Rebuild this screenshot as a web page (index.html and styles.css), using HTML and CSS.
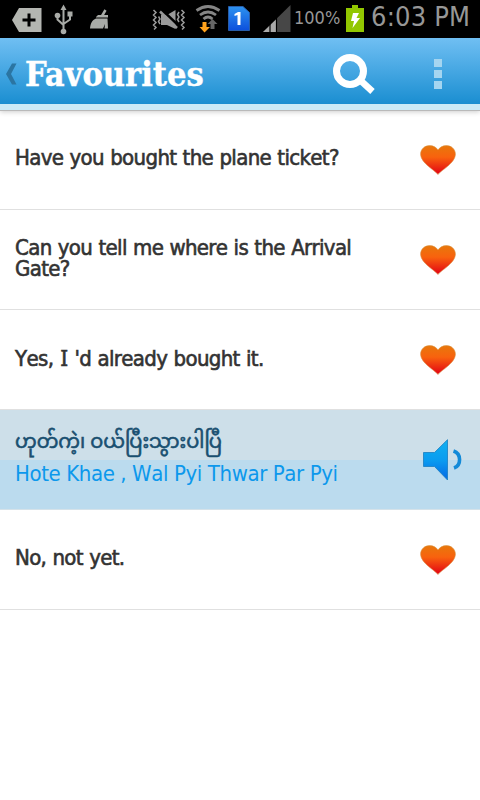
FILE: index.html
```html
<!DOCTYPE html>
<html lang="en">
<head>
  <meta charset="UTF-8">
  <meta name="viewport" content="width=device-width, initial-scale=1.0">
  <title>Favourites</title>
  <link rel="stylesheet" href="styles.css">
</head>
<body>

  <!-- gradients and the heart shared by the rows -->
  <svg class="defs" width="0" height="0">
    <defs>
      <linearGradient id="heartFill" x1="0" y1="0" x2="0" y2="1">
        <stop offset="0" stop-color="#e8780c"/>
        <stop offset="0.4" stop-color="#f8620e"/>
        <stop offset="1" stop-color="#e20015"/>
      </linearGradient>
      <linearGradient id="speakerFill" x1="0" y1="0" x2="0" y2="1">
        <stop offset="0" stop-color="#10b0f0"/>
        <stop offset="0.5" stop-color="#0a9cf0"/>
        <stop offset="1" stop-color="#0468e4"/>
      </linearGradient>
      <linearGradient id="simFill" x1="0" y1="0" x2="0" y2="1">
        <stop offset="0" stop-color="#2d93f0"/>
        <stop offset="1" stop-color="#0c4fdc"/>
      </linearGradient>
      <symbol id="heart" viewBox="0 0 36 30">
        <path d="M18 29.500C16 26 1 18.500 .6 9.500C.4 4 5 .6 9.500.6C13.500.6 16.500 2.500 18 5C19.500 2.500 22.500.6 26.500.6C31 .6 35.600 4 35.400 9.500C35 18.500 20 26 18 29.500Z" fill="url(#heartFill)" stroke="#d89040" stroke-width="0.6"/>
      </symbol>
    </defs>
  </svg>

  <div class="statusbar">
    <svg class="status-icons" width="292" height="38" viewBox="0 0 292 38">
      <!-- tag -->
      <path d="M12 20L19 8H41.500V32H19Z" fill="#b4b6b1"/>
      <path d="M29 13.500V26.500M22.500 20H35.500" stroke="#000" stroke-width="3"/>
      <!-- usb -->
      <g stroke="#a9aba7" stroke-width="2" fill="none">
        <path d="M63.500 8V32M57.500 16V19.500L63.500 25M70 15V19.500L63.500 24"/>
      </g>
      <g fill="#a9aba7">
        <path d="M60.500 10L63.500 4.500L66.500 10Z"/>
        <circle cx="57.500" cy="15.500" r="2.800"/>
        <rect x="67.500" y="11.500" width="5" height="5"/>
        <circle cx="63.500" cy="31.500" r="2.800"/>
      </g>
      <!-- broom -->
      <path d="M105.500 10L102 16" stroke="#a9aba7" stroke-width="2.500"/>
      <path d="M96 17L98 15H108V17.500H96ZM96 18.500H107.500L108 28.500H104.500L105 24L103 28.500H90C90.500 23.500 92 20 96 18.500Z" fill="#a9aba7"/>
      <!-- vibrate, muted -->
      <path d="M153.500 10L156 12.500L153.500 15L156 17.500L153.500 20L156 22.500L153.500 25L156 27.500L154 29.500M181.500 10L184 12.500L181.500 15L184 17.500L181.500 20L184 22.500L181.500 25L184 27.500L182 29.500M158.500 16.500L160 19L158.500 21.500L160 24M179 12L177.500 14.500L179 17L177.500 19.500L179 22" fill="none" stroke="#9a9a9a" stroke-width="1.500"/>
      <path d="M161 15H167L175.500 10V29L167 25H161Z" fill="#999"/>
      <path d="M161 9L179 26" stroke="#000" stroke-width="2.500"/>
      <path d="M160 11.500L177 28" stroke="#999" stroke-width="2.500"/>
      <!-- wifi -->
      <g fill="none" stroke="#858585" stroke-width="2.800">
        <path d="M196.500 10.500Q208 2.500 219.500 10.500"/>
        <path d="M200 15Q208 9 216 15"/>
        <path d="M203.500 19Q208 15 212.500 19"/>
      </g>
      <path d="M202.500 22H206.500V27H210L204.500 32.500L199.500 27H202.500Z" fill="#ffa21c"/>
      <path d="M212.500 19L217.500 24H214.500V29H210.500V24H207.500Z" fill="#666"/>
      <!-- sim 1 -->
      <path d="M228.500 6.500H243L249.500 12.500V30.500H228.500Z" fill="url(#simFill)" stroke="#285da8"/>
      <path d="M234.500 14L238 12H240.500V25H237.500V15L234.500 16Z" fill="#fff"/>
      <!-- signal -->
      <path d="M263 32L290.500 5V32Z" fill="#474747"/>
      <path d="M263 32L276 19.500V32Z" fill="#aaa"/>
      <path d="M270 24V32M276.500 18V32" stroke="#000" stroke-width="1.200"/>
    </svg>
    <span class="battery-level">100%</span>
    <svg class="battery" width="18" height="28" viewBox="0 0 18 28">
      <path d="M0 3H6V0H12V3H18V27H0Z" fill="#92c700"/>
      <path d="M7 8H13L10.500 13H14L6.500 23L8 16H5Z" fill="#fff"/>
    </svg>
    <span class="clock">6:03 PM</span>
  </div>

  <header class="header">
    <svg class="back" width="11" height="22" viewBox="0 0 11 22">
      <path d="M6 .5H10.500L5 11L10.500 21.500H6L0 11Z" fill="#2b75a2"/>
    </svg>
    <h1 class="title">Favourites</h1>
    <svg class="search" width="44" height="42" viewBox="0 0 44 42">
      <circle cx="17" cy="17" r="13.500" fill="none" stroke="#fff" stroke-width="7"/>
      <path d="M27 26L39.500 37.500" stroke="#fff" stroke-width="6.500"/>
    </svg>
    <div class="menu"><i></i><i></i><i></i></div>
  </header>

  <ul class="phrases">
    <li class="phrase">
      <p class="text">Have you bought the plane ticket?</p>
      <svg class="heart" width="36" height="30"><use href="#heart"/></svg>
    </li>
    <li class="phrase">
      <p class="text">Can you tell me where is the Arrival Gate?</p>
      <svg class="heart" width="36" height="30"><use href="#heart"/></svg>
    </li>
    <li class="phrase">
      <p class="text">Yes, <span class="serif-i">I</span> 'd already bought it.</p>
      <svg class="heart" width="36" height="30"><use href="#heart"/></svg>
    </li>
    <li class="phrase translation">
      <div class="answer">
        <p class="burmese" lang="my">ဟုတ်ကဲ့၊ ဝယ်ပြီးသွားပါပြီ</p>
        <p class="roman">Hote Khae , Wal Pyi Thwar Par Pyi</p>
      </div>
      <svg class="speaker" width="39" height="42" viewBox="0 0 39 42">
        <path d="M.5 13.500H11.500L24.500 .7V41L11.500 27.500H.5Z" fill="url(#speakerFill)" stroke="#187ec0" stroke-width="0.800"/>
        <path d="M30.500 12C38.500 14.500 38.500 26.500 31 29" fill="none" stroke="#128ad8" stroke-width="3.600"/>
      </svg>
    </li>
    <li class="phrase">
      <p class="text">No, not yet.</p>
      <svg class="heart" width="36" height="30"><use href="#heart"/></svg>
    </li>
  </ul>

</body>
</html>
```

FILE: styles.css
```css
* {
  box-sizing: border-box;
}
body {
  margin: 0;
  background: #fff;
  font-family: "DejaVu Sans Condensed", "DejaVu Sans", sans-serif;
  font-stretch: condensed;
  font-kerning: none;
}
h1, p, ul {
  margin: 0;
  padding: 0;
}
svg {
  display: block;
  flex: none;
}
.defs {
  position: absolute;
}

/* status bar */
.statusbar {
  display: flex;
  height: 38px;
  background: #000;
  color: #979797;
  white-space: nowrap;
}
.battery-level {
  width: 54px;
  padding-left: 2px;
  font-size: 18px;
  line-height: 36px;
}
.battery {
  margin-top: 5px;
}
.clock {
  padding-left: 7px;
  font-size: 27px;
  line-height: 34px;
  letter-spacing: 0.2px;
}

/* header */
.header {
  display: flex;
  height: 72px;
  padding-left: 6px;
  background: linear-gradient(#70bff3, #1a8ed1);
  border-bottom: 6px solid #caeaf7;
  background-clip: padding-box;
  box-shadow: 0 1px 0 #b9b9b9, 0 2px 5px rgba(0, 0, 0, 0.2);
  position: relative;
}
.back {
  margin-top: 25px;
}
.title {
  width: 308px;
  padding-left: 8px;
  color: #fff;
  font: bold 34px/72px "DejaVu Serif Condensed", "DejaVu Serif", serif;
  font-stretch: condensed;
  font-kerning: normal;
  -webkit-text-stroke: 0.4px #fff;
}
.search {
  margin: 16px 0 0 8px;
}
.menu {
  display: grid;
  gap: 3px;
  align-content: start;
  padding: 21px 0 0 57px;
}
.menu i {
  width: 8px;
  height: 8px;
  background: #a5d5f0;
}

/* list */
.phrases {
  list-style: none;
}
.phrase {
  display: flex;
  align-items: center;
  justify-content: space-between;
  height: 100px;
  padding: 0 24px 0 15px;
  border-bottom: 1px solid #e0e0e0;
}
.text {
  width: 365px;
  padding-bottom: 4px;
  color: #333;
  font-size: 22px;
  line-height: 21px;
  -webkit-text-stroke: 0.6px #333;
  letter-spacing: -0.65px;
  word-spacing: 0.6px;
}
.serif-i {
  padding: 0 1px;
  font-family: "Noto Sans", sans-serif;
}
.translation {
  padding-right: 18px;
  background: linear-gradient(#cddfe9 50%, #bbdbee 50%);
  border-color: #d5e2e9;
}
.answer {
  padding-bottom: 5px;
}
.burmese {
  color: #194f70;
  font-size: 19.3px;
  line-height: 34px;
  font-family: "Noto Sans Myanmar", "Noto Sans", sans-serif;
  font-kerning: normal;
  -webkit-text-stroke: 0.6px #194f70;
}
.roman {
  color: #0c98ec;
  font-size: 22px;
  line-height: 26px;
  letter-spacing: -0.4px;
}
```
